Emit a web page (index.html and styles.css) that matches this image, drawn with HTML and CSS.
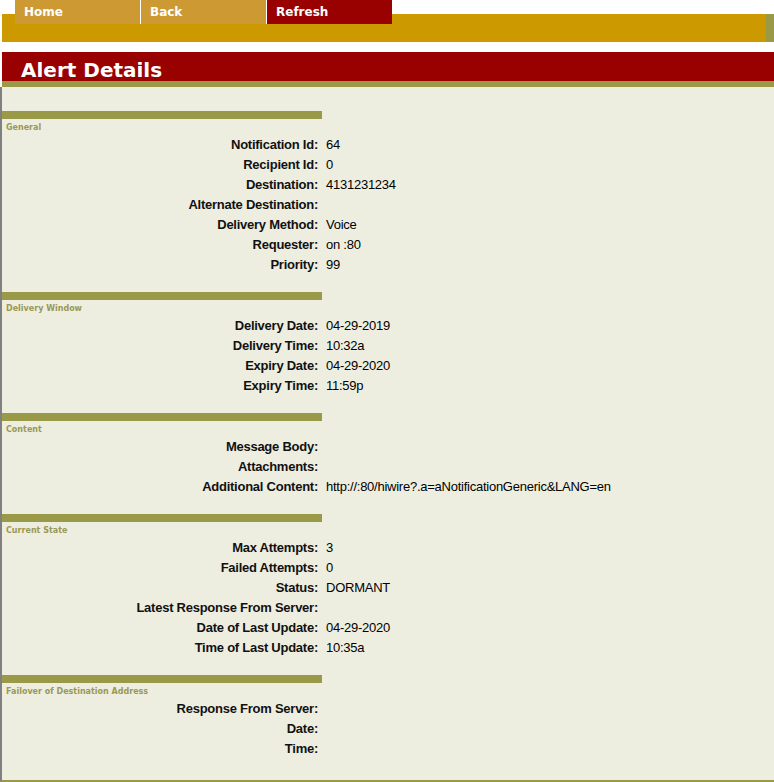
FILE: index.html
```html
<!DOCTYPE html>
<html lang="en">

<head>
    <meta charset="UTF-8">
    <title>Alert Details</title>
    <link rel="stylesheet" href="styles.css">
</head>

<body>

    <div class="topbar">
        <div class="tabs">
            <a class="tab" href="#">Home</a>
            <a class="tab" href="#">Back</a>
            <a class="tab active" href="#">Refresh</a>
        </div>
    </div>

    <h1 class="title">Alert Details</h1>

    <div class="content">

        <div class="section">
            <div class="section-bar"></div>
            <div class="section-name">General</div>
            <div class="row"><span class="label">Notification Id:</span><span class="value">64</span></div>
            <div class="row"><span class="label">Recipient Id:</span><span class="value">0</span></div>
            <div class="row"><span class="label">Destination:</span><span class="value">4131231234</span></div>
            <div class="row"><span class="label">Alternate Destination:</span><span class="value"></span></div>
            <div class="row"><span class="label">Delivery Method:</span><span class="value">Voice</span></div>
            <div class="row"><span class="label">Requester:</span><span class="value">on :80</span></div>
            <div class="row"><span class="label">Priority:</span><span class="value">99</span></div>
        </div>

        <div class="section">
            <div class="section-bar"></div>
            <div class="section-name">Delivery Window</div>
            <div class="row"><span class="label">Delivery Date:</span><span class="value">04-29-2019</span></div>
            <div class="row"><span class="label">Delivery Time:</span><span class="value">10:32a</span></div>
            <div class="row"><span class="label">Expiry Date:</span><span class="value">04-29-2020</span></div>
            <div class="row"><span class="label">Expiry Time:</span><span class="value">11:59p</span></div>
        </div>

        <div class="section">
            <div class="section-bar"></div>
            <div class="section-name">Content</div>
            <div class="row"><span class="label">Message Body:</span><span class="value"></span></div>
            <div class="row"><span class="label">Attachments:</span><span class="value"></span></div>
            <div class="row"><span class="label">Additional Content:</span><span class="value">http://:80/hiwire?.a=aNotificationGeneric&amp;LANG=en</span></div>
        </div>

        <div class="section">
            <div class="section-bar"></div>
            <div class="section-name">Current State</div>
            <div class="row"><span class="label">Max Attempts:</span><span class="value">3</span></div>
            <div class="row"><span class="label">Failed Attempts:</span><span class="value">0</span></div>
            <div class="row"><span class="label">Status:</span><span class="value">DORMANT</span></div>
            <div class="row"><span class="label">Latest Response From Server:</span><span class="value"></span></div>
            <div class="row"><span class="label">Date of Last Update:</span><span class="value">04-29-2020</span></div>
            <div class="row"><span class="label">Time of Last Update:</span><span class="value">10:35a</span></div>
        </div>

        <div class="section">
            <div class="section-bar"></div>
            <div class="section-name">Failover of Destination Address</div>
            <div class="row"><span class="label">Response From Server:</span><span class="value"></span></div>
            <div class="row"><span class="label">Date:</span><span class="value"></span></div>
            <div class="row"><span class="label">Time:</span><span class="value"></span></div>
        </div>

    </div>

</body>

</html>
```

FILE: styles.css
```css
body {
    margin: 0;
    padding: 0;
    background-color: #ffffff;
    font-family: "Liberation Sans", Arial, sans-serif;
    color: #000000;
}

/* tab strip sits half over the gold band */
.topbar {
    height: 42px;
    margin-left: 2px;
    background:
        linear-gradient(to bottom, #ffffff 14px, transparent 14px),
        linear-gradient(to right, #cc9900 764px, #999948 764px);
}

.tabs {
    display: flex;
    margin-left: 13px;
}

.tab {
    width: 116px;
    height: 24px;
    padding-left: 9px;
    background-color: #cc9933;
    color: #ffffff;
    font-family: "DejaVu Sans", Verdana, sans-serif;
    font-size: 12px;
    font-weight: bold;
    line-height: 24px;
    text-decoration: none;
}

.tab + .tab {
    border-left: 1px solid #ffffff;
}

.tab.active {
    background-color: #990000;
}

.title {
    margin: 10px 0 0 2px;
    height: 24px;
    padding: 5px 0 0 19px;
    background-color: #990000;
    border-bottom: 6px solid #999948;
    color: #ffffff;
    font-family: "DejaVu Sans", Verdana, sans-serif;
    font-size: 20px;
    font-weight: bold;
    line-height: 26px;
}

.content {
    background-color: #eeeee0;
    border-left: 2px solid #808080;
    border-bottom: 2px solid #999948;
    padding: 24px 0 22px 0;
}

.section {
    margin-bottom: 18px;
}

.section:last-child {
    margin-bottom: 0;
}

.section-bar {
    width: 320px;
    height: 8px;
    background-color: #999948;
}

.section-name {
    height: 14px;
    padding: 1px 0 0 4px;
    color: #999955;
    font-family: "DejaVu Sans", Verdana, sans-serif;
    font-size: 8px;
    font-weight: bold;
    line-height: 15px;
}

.row {
    display: flex;
    height: 19px;
    padding-top: 1px;
    line-height: 20px;
    font-size: 13px;
    letter-spacing: -0.25px;
}

.label {
    width: 316px;
    flex-shrink: 0;
    text-align: right;
    font-weight: bold;
    color: #111111;
}

.value {
    margin-left: 8px;
    white-space: nowrap;
}
```
